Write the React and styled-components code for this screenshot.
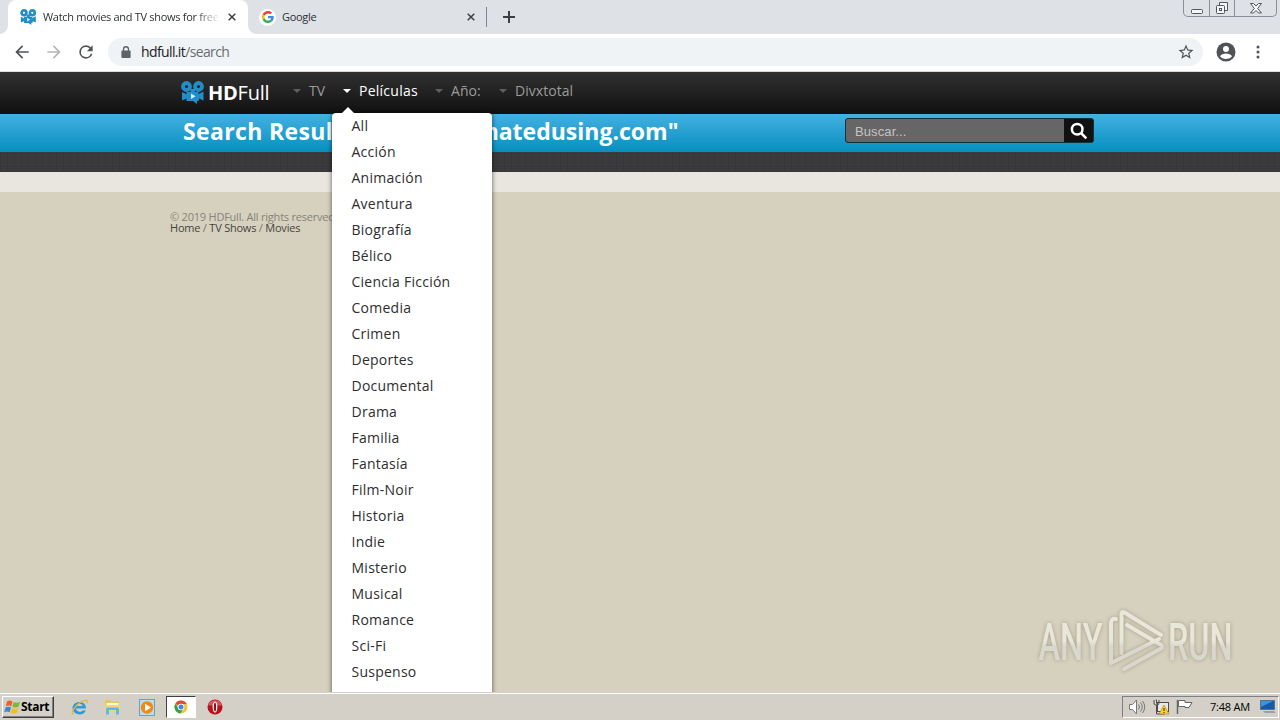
import styled, { createGlobalStyle } from "styled-components";

const genres = [
  "All",
  "Acción",
  "Animación",
  "Aventura",
  "Biografía",
  "Bélico",
  "Ciencia Ficción",
  "Comedia",
  "Crimen",
  "Deportes",
  "Documental",
  "Drama",
  "Familia",
  "Fantasía",
  "Film-Noir",
  "Historia",
  "Indie",
  "Misterio",
  "Musical",
  "Romance",
  "Sci-Fi",
  "Suspenso",
];

export default function App() {
  return (
    <Screen>
      <GlobalStyle />
      <TabStrip>
        <ActiveTab>
          <CameraIcon $width={17} $height={16} />
          <TabTitle $faded>Watch movies and TV shows for free</TabTitle>
          <CloseIcon />
        </ActiveTab>
        <Tab>
          <GoogleIcon />
          <TabTitle>Google</TabTitle>
          <CloseIcon />
        </Tab>
        <NewTab viewBox="0 0 12 12">
          <path d="M6 0v12M0 6h12" />
        </NewTab>
        <WindowButtons>
          <WindowButton $width={25}>
            <svg width="14" height="15" viewBox="0 0 14 15">
              <rect x="1.5" y="8.5" width="11" height="4" rx="1" />
            </svg>
          </WindowButton>
          <WindowButton $width={25}>
            <svg width="14" height="15" viewBox="0 0 14 15">
              <path d="M4.5 4V1.500h8v8H10" />
              <rect x="1.500" y="4.500" width="8" height="8" rx="1" />
              <rect x="4.500" y="7.500" width="2" height="2" />
            </svg>
          </WindowButton>
          <WindowButton $width={42}>
            <svg width="14" height="15" viewBox="0 0 14 15">
              <path d="M1.500 2.500h3L7 5l2.500-2.500h3L8.700 7.500l3.800 4.500h-3L7 9.500 4.500 12h-3l3.800-4.500z" />
            </svg>
          </WindowButton>
        </WindowButtons>
      </TabStrip>

      <Toolbar>
        <NavIcon viewBox="0 0 24 24">
          <path d="M20 11H7.830l5.590-5.590L12 4l-8 8 8 8 1.410-1.410L7.830 13H20z" />
        </NavIcon>
        <NavIcon viewBox="0 0 24 24" $disabled>
          <path d="M12 4l-1.410 1.410L16.170 11H4v2h12.170l-5.580 5.590L12 20l8-8z" />
        </NavIcon>
        <NavIcon viewBox="0 0 24 24">
          <path d="M17.650 6.350A7.960 7.960 0 0 0 12 4a8 8 0 1 0 7.730 10h-2.080A6 6 0 1 1 12 6c1.660 0 3.140.69 4.220 1.780L13 11h7V4z" />
        </NavIcon>
        <AddressBar>
          <LockIcon viewBox="0 0 10 13">
            <path d="M2.300 6V3.500a2.700 2.700 0 0 1 5.400 0V6" />
            <rect y="5" width="10" height="8" rx="1" />
          </LockIcon>
          <Address>
            hdfull.it<span>/search</span>
          </Address>
          <StarIcon viewBox="0 0 24 24">
            <path d="M22 9.240l-7.190-.62L12 2 9.190 8.630 2 9.240l5.460 4.730L5.820 21 12 17.270 18.180 21l-1.630-7.030zM12 15.400l-3.760 2.270 1-4.280-3.320-2.880 4.380-.38L12 6.100l1.710 4.040 4.380.38-3.320 2.880 1 4.280z" />
          </StarIcon>
        </AddressBar>
        <ProfileIcon viewBox="0 0 20 20">
          <circle cx="10" cy="10" r="9.500" />
          <circle cx="10" cy="7" r="3" />
          <path d="M4 14.200c1.200-1.900 3.400-2.700 6-2.700s4.800.8 6 2.700c-1.300 1.800-3.500 2.800-6 2.800s-4.700-1-6-2.800z" />
        </ProfileIcon>
        <MenuDots viewBox="0 0 4 14">
          <circle cx="2" cy="2" r="1.500" />
          <circle cx="2" cy="7" r="1.500" />
          <circle cx="2" cy="12" r="1.500" />
        </MenuDots>
      </Toolbar>

      <Site>
        <Header>
          <CameraIcon $width={24} $height={23} />
          <Brand>
            <b>HD</b>Full
          </Brand>
          <Navigation>
            <NavItem $width={50}>
              <Caret />
              TV
            </NavItem>
            <NavItem $width={92} $active>
              <Caret $active />
              Películas
              <Dropdown>
                {genres.map((genre) => (
                  <Genre key={genre}>{genre}</Genre>
                ))}
              </Dropdown>
            </NavItem>
            <NavItem $width={64}>
              <Caret />
              Año:
            </NavItem>
            <NavItem $width={80}>
              <Caret />
              Divxtotal
            </NavItem>
          </Navigation>
        </Header>
        <TitleBar>
          <Title>
            <TitleLead>Search Results</TitleLead>
            <span>"animatedusing.com"</span>
          </Title>
          <SearchForm>
            <SearchInput type="text" placeholder="Buscar..." />
            <SearchButton>
              <svg width="18" height="18" viewBox="0 0 18 18">
                <circle cx="7.200" cy="7.200" r="5.300" />
                <path d="M11 11l5.300 5.300" />
              </svg>
            </SearchButton>
          </SearchForm>
        </TitleBar>
        <FabricStrip />
        <PaleStrip />
        <Footer>
          <p>© 2019 HDFull. All rights reserved.</p>
          <FooterLinks>
            <span>Home</span> / <span>TV Shows</span> / <span>Movies</span>
          </FooterLinks>
        </Footer>
        <Watermark />
      </Site>

      <Taskbar>
        <StartButton>
          <WindowsIcon />
          Start
        </StartButton>
        <QuickLaunch>
          <TaskButton>
            <ExplorerIcon />
          </TaskButton>
          <TaskButton>
            <FolderIcon />
          </TaskButton>
          <TaskButton>
            <PlayerIcon />
          </TaskButton>
          <TaskButton $active>
            <ChromeIcon />
          </TaskButton>
          <TaskButton>
            <OperaIcon />
          </TaskButton>
        </QuickLaunch>
        <Tray>
          <TrayIcons />
          <Clock>7:48 AM</Clock>
          <DesktopIcon />
        </Tray>
      </Taskbar>
    </Screen>
  );
}

function CameraIcon({ $width, $height }) {
  return (
    <svg width={$width} height={$height} viewBox="0 0 24 23">
      <g fill="none" stroke="#218ec9" strokeWidth="3.800">
        <circle cx="5.500" cy="5.500" r="3.500" />
        <circle cx="17.500" cy="5.500" r="3.500" />
      </g>
      <path
        d="M9.500 8h4.500v3h3.500v2l5-2.500v9L18 17.500v2l-2 .5v3l-4-3H5.500v-2.500L1 19.500v-8.500l4.500 2.200V11h4z"
        fill="#218ec9"
      />
      <path d="M10 12.500v5.500l4.500-2.700z" fill="#d5effc" />
    </svg>
  );
}

function GoogleIcon() {
  return (
    <GoogleBadge>
      <svg width="12" height="12" viewBox="0 0 48 48">
        <path
          fill="#ea4335"
          d="M24 9.500c3.540 0 6.710 1.220 9.210 3.600l6.850-6.850C35.900 2.380 30.470 0 24 0 14.620 0 6.510 5.380 2.560 13.220l7.980 6.190C12.430 13.720 17.740 9.500 24 9.500z"
        />
        <path
          fill="#4285f4"
          d="M46.980 24.550c0-1.570-.15-3.090-.38-4.550H24v9.020h12.940c-.58 2.960-2.260 5.480-4.780 7.180l7.730 6c4.510-4.180 7.090-10.360 7.090-17.650z"
        />
        <path
          fill="#fbbc05"
          d="M10.530 28.590A14.500 14.500 0 0 1 9.770 24c0-1.600.27-3.140.76-4.590l-7.980-6.190A23.900 23.900 0 0 0 0 24c0 3.880.92 7.540 2.560 10.780z"
        />
        <path
          fill="#34a853"
          d="M24 48c6.480 0 11.930-2.130 15.890-5.810l-7.730-6c-2.150 1.450-4.920 2.300-8.160 2.300-6.260 0-11.570-4.220-13.470-9.910l-7.980 6.190C6.510 42.620 14.620 48 24 48z"
        />
      </svg>
    </GoogleBadge>
  );
}

function CloseIcon() {
  return (
    <Close viewBox="0 0 8 8">
      <path d="M.7.7l6.600 6.600M7.300.7L.7 7.300" />
    </Close>
  );
}

function WindowsIcon() {
  return (
    <svg width="17" height="16" viewBox="0 0 17 16">
      <path d="M3 2.500C5 1 7 1.500 8.500 2.500L7.300 7.300C5.500 6.300 3.800 6.300 1.800 7.300z" fill="#e8642c" />
      <path d="M9.500 3c2 1 4 1 6.500-.3l-1.400 5c-2.300 1-4.300 1.200-6.200 0z" fill="#7bb83c" />
      <path d="M1.500 8.500c2-1 3.800-1 5.500 0l-1.300 4.800c-1.700-1-3.500-1-5.500 0z" fill="#3e86d2" />
      <path d="M8 9c2 1 4 1 6.300-.2L13 13.700c-2.200 1.200-4.400 1.100-6.300 0z" fill="#f3bf27" />
    </svg>
  );
}

function ExplorerIcon() {
  return (
    <svg width="17" height="17" viewBox="0 0 17 17">
      <path
        d="M15 9.600H5c.2 3.200 5 4.100 6.600 1.900h3.200C12.500 18 1.500 16 1.500 9 1.500 1 15.500.500 15 9.600zM5 7h6.500c-.5-3-5.800-3-6.500 0z"
        fill="#2d9add"
        fillRule="evenodd"
      />
      <path
        d="M2 15.500C-1 12 9 1 15.500 1.300c1 .5.700 2 .2 3"
        fill="none"
        stroke="#e9b72f"
        strokeWidth="1.300"
      />
    </svg>
  );
}

function FolderIcon() {
  return (
    <svg width="17" height="16" viewBox="0 0 17 16">
      <path d="M1 2.500L2 1h4l1 1.500h8V8H1z" fill="#e8c55c" />
      <path d="M2.500 4h12v5h-12z" fill="#fff7ce" />
      <path d="M1 6h15v6H1z" fill="#f0d779" />
      <path d="M2 15.500V10q0-1.500 1.500-1.500h10Q15 8.500 15 10v5.500h-3V11H5v4.500z" fill="#62b7e4" />
    </svg>
  );
}

function PlayerIcon() {
  return (
    <svg width="16" height="17" viewBox="0 0 16 17">
      <rect x=".5" y=".5" width="15" height="16" fill="#b9dcf0" stroke="#6f9fc6" />
      <circle cx="8" cy="8.500" r="6.200" fill="#f08a14" />
      <path d="M6 4.800v7.400l6-3.700z" fill="#fff" />
    </svg>
  );
}

function ChromeIcon() {
  return (
    <svg width="14" height="14" viewBox="0 0 14 14">
      <circle cx="7" cy="7" r="6.500" fill="#f6c62d" />
      <path d="M7 7L1.300 3.800A6.500 6.500 0 0 1 12.700 4H7z" fill="#dd4b39" />
      <path d="M1.300 3.800A6.500 6.500 0 0 0 6.500 13.500L9 9 4.500 8.500z" fill="#35a04c" />
      <circle cx="7" cy="7" r="3.300" fill="#fff" />
      <circle cx="7" cy="7" r="2.500" fill="#4285f4" />
    </svg>
  );
}

function OperaIcon() {
  return (
    <svg width="16" height="16" viewBox="0 0 16 16">
      <ellipse cx="8" cy="8" rx="7.500" ry="7.500" fill="#b5121b" />
      <path d="M1 6.500C3-.5 13-.5 15 6.500z" fill="#d8555b" />
      <ellipse cx="8" cy="8" rx="2.400" ry="5.500" fill="#fff" />
      <ellipse cx="8" cy="8" rx="1.100" ry="4.500" fill="#8f0d15" />
    </svg>
  );
}

function TrayIcons() {
  return (
    <svg width="66" height="18" viewBox="0 0 66 18">
      <g fill="none" stroke="#77777a">
        <path d="M1.500 6.500h3l4-4.500v14l-4-4.500h-3z" fill="#fff" />
        <path d="M10.500 6.500q2 2.500 0 5M12.500 4.500q3.500 4.500 0 9M14.500 3q4.500 6 0 12" />
      </g>
      <g stroke="#4c4c4c">
        <rect x="29.500" y="4.500" width="11" height="9" fill="#e8e8e8" />
        <path d="M26 2v3q0 2 2 2h1q2 0 2-2V2M28.500 1.500v4M28.500 7v9h8" fill="none" />
      </g>
      <path d="M36 7l5 9H31z" fill="#ffd42a" stroke="#b18a10" strokeWidth=".7" />
      <path d="M36 10v3M36 14v1" stroke="#222" />
      <g fill="#fff" stroke="#66666a">
        <path d="M49.500 2v14" strokeWidth="1.500" />
        <path d="M50.500 2.500H57v2h7l-3 5h-4v-1h-6.500z" />
      </g>
    </svg>
  );
}

function DesktopIcon() {
  return (
    <svg width="16" height="14" viewBox="0 0 16 14">
      <path d="M.5.500h14v9H.5z" fill="#1659a8" stroke="#54728f" />
      <path d="M1 1h12L1 7z" fill="#3e93dc" />
      <path d="M3 11h11l1.500 2H5z" fill="#8aa3b6" />
    </svg>
  );
}

function Watermark() {
  return (
    <WatermarkSvg viewBox="0 0 210 76">
      <defs>
        <linearGradient id="mark" x1="0" y1="0" x2="0" y2="76" gradientUnits="userSpaceOnUse">
          <stop offset="0.480" stopColor="#e9e6da" />
          <stop offset="0.560" stopColor="#dad7cd" />
        </linearGradient>
      </defs>
      <g fill="url(#mark)">
        <text x="8.500" y="55.500" textLength="64" lengthAdjust="spacingAndGlyphs">
          ANY
        </text>
        <text x="138" y="55.500" textLength="64.500" lengthAdjust="spacingAndGlyphs">
          RUN
        </text>
      </g>
      <g
        fill="none"
        stroke="url(#mark)"
        strokeWidth="4"
        strokeLinecap="round"
        strokeLinejoin="round"
      >
        <path d="M86 15q-5-1-5 5v39l48-24" />
        <path d="M91.500 49V10q0-3 3-1.500L131 31" />
        <path d="M97 21l34 20q2 2 0 3.500L94 65" />
      </g>
    </WatermarkSvg>
  );
}

const GlobalStyle = createGlobalStyle`
  * {
    box-sizing: border-box;
  }

  body {
    font-family: "Open Sans", sans-serif;
    margin: 0;
    overflow: hidden;
  }

  svg {
    display: block;
    flex-shrink: 0;
  }
`;

const Screen = styled.div`
  display: flex;
  flex-direction: column;
  height: 720px;
  overflow: hidden;
  width: 1280px;
`;

const TabStrip = styled.div`
  background-color: #dee1e6;
  display: flex;
  height: 34px;
  padding-left: 8px;
`;

const Tab = styled.div`
  align-items: center;
  display: flex;
  height: 34px;
  padding: 0 12px 0 11px;
  position: relative;
  width: 239px;

  &::after {
    background-color: #80868b;
    content: "";
    height: 20px;
    position: absolute;
    right: 0;
    top: 7px;
    width: 1px;
  }
`;

const ActiveTab = styled.div`
  align-items: center;
  background-color: #fff;
  border-radius: 8px 8px 0 0;
  display: flex;
  height: 34px;
  padding: 0 12px;
  position: relative;
  width: 240px;

  &::before,
  &::after {
    bottom: 0;
    content: "";
    height: 8px;
    position: absolute;
    width: 8px;
  }

  &::before {
    background: radial-gradient(circle at 0 0, transparent 7.5px, #fff 8px);
    left: -8px;
  }

  &::after {
    background: radial-gradient(circle at 100% 0, transparent 7.5px, #fff 8px);
    right: -8px;
  }
`;

const TabTitle = styled.span`
  color: #2d3033;
  flex: 1;
  font-size: 11px;
  letter-spacing: -0.300px;
  margin: 0 10px 1px 6px;
  overflow: hidden;
  white-space: nowrap;
  ${(props) =>
    props.$faded && "mask-image: linear-gradient(90deg, #000 152px, transparent 177px);"}
`;

const Close = styled.svg`
  fill: none;
  height: 8px;
  stroke: #3c4043;
  stroke-width: 1.500;
  width: 8px;
`;

const GoogleBadge = styled.span`
  align-items: center;
  background-color: #fff;
  border-radius: 50%;
  display: flex;
  height: 17px;
  justify-content: center;
  width: 17px;
`;

const NewTab = styled.svg`
  height: 12px;
  margin: 11px 0 0 16px;
  stroke: #3c4043;
  stroke-width: 2;
  width: 12px;
`;

const WindowButtons = styled.div`
  border: 1px solid #8b8e94;
  border-radius: 0 0 5px 5px;
  border-top: none;
  display: flex;
  height: 17px;
  margin: 0 3px 0 auto;
`;

const WindowButton = styled.div`
  align-items: center;
  display: flex;
  justify-content: center;
  width: ${(props) => props.$width}px;

  & + & {
    border-left: 1px solid #8b8e94;
  }

  svg {
    fill: #f5f6f8;
    stroke: #53565c;
  }
`;

const Toolbar = styled.div`
  align-items: center;
  background-color: #fff;
  border-bottom: 1px solid #d8dadc;
  display: flex;
  height: 38px;
  padding: 0 18px 1px 12px;
`;

const NavIcon = styled.svg`
  fill: ${(props) => (props.$disabled ? "#b5b7b9" : "#505356")};
  height: 20px;
  margin-right: 12px;
  width: 20px;
`;

const AddressBar = styled.div`
  align-items: center;
  background-color: #f0f3f5;
  border-radius: 14px;
  display: flex;
  height: 28px;
  padding: 0 8px 0 13px;
  width: 1095px;
`;

const LockIcon = styled.svg`
  fill: #5f6368;
  height: 12px;
  width: 10px;

  path {
    fill: none;
    stroke: #5f6368;
    stroke-width: 1.400;
  }
`;

const Address = styled.span`
  color: #202124;
  flex: 1;
  font-size: 14px;
  letter-spacing: -0.620px;
  margin: 0 0 1px 10px;

  span {
    color: #686c71;
  }
`;

const StarIcon = styled.svg`
  fill: #505356;
  height: 18px;
  width: 18px;
`;

const ProfileIcon = styled.svg`
  fill: #505356;
  height: 20px;
  margin-left: 13px;
  width: 20px;

  circle + circle,
  path {
    fill: #fff;
  }
`;

const MenuDots = styled.svg`
  fill: #505356;
  height: 14px;
  margin-left: 20px;
  width: 4px;
`;

const Site = styled.main`
  background-color: #d6d1be;
  height: 620px;
  overflow: hidden;
  position: relative;
`;

const Header = styled.header`
  align-items: center;
  background: linear-gradient(#313131, #101010);
  display: flex;
  height: 42px;
  padding: 0 0 2px 181px;
`;

const Brand = styled.span`
  color: #fff;
  font-size: 20px;
  font-weight: 400;
  letter-spacing: -0.250px;
  margin-left: 3px;
  width: 85px;
`;

const Navigation = styled.nav`
  display: flex;
`;

const NavItem = styled.div`
  align-items: center;
  color: ${(props) => (props.$active ? "#fff" : "#9b9b9b")};
  display: flex;
  font-size: 14px;
  height: 40px;
  letter-spacing: ${(props) => (props.$active ? "0.25px" : "0.05px")};
  padding-bottom: 3px;
  position: relative;
  white-space: nowrap;
  width: ${(props) => props.$width}px;
`;

const Caret = styled.i`
  border: 4px solid transparent;
  border-bottom: none;
  border-top-color: ${(props) => (props.$active ? "#fff" : "#5e5e5e")};
  margin-right: 8px;
`;

const Dropdown = styled.div`
  background-color: #fff;
  border-radius: 4px 4px 0 0;
  box-shadow: 0 0 5px rgba(0, 0, 0, 0.6);
  height: 600px;
  left: -11px;
  letter-spacing: 0.250px;
  position: absolute;
  top: 41px;
  width: 160px;
  z-index: 1;

  &::before {
    border: 6px solid transparent;
    border-bottom-color: #fff;
    border-top: none;
    content: "";
    left: 10px;
    position: absolute;
    top: -6px;
  }
`;

const Genre = styled.div`
  color: #2e2e2e;
  font-size: 14px;
  height: 26px;
  line-height: 25px;
  padding-left: 19.500px;
`;

const TitleBar = styled.div`
  background: linear-gradient(#43b1e2, #068fbf);
  display: flex;
  height: 38px;
  padding: 3px 186px 0 183px;
`;

const Title = styled.h1`
  color: #fff;
  display: flex;
  font-size: 23px;
  font-weight: 700;
  justify-content: space-between;
  line-height: 28px;
  margin: 0;
  white-space: nowrap;
  width: 495.500px;
`;

const TitleLead = styled.span`
  letter-spacing: 0.350px;
`;

const SearchForm = styled.form`
  background-color: #111;
  border: 1px solid #14303c;
  border-radius: 3px;
  display: flex;
  height: 25px;
  margin: 1px 0 0 auto;
  overflow: hidden;
  width: 249px;
`;

const SearchInput = styled.input`
  background-color: #666;
  border: none;
  color: #fff;
  font-family: "Liberation Sans", sans-serif;
  font-size: 13px;
  letter-spacing: 0.100px;
  padding: 1px 9px 0;
  width: 218px;

  &::placeholder {
    color: #c4c4c4;
  }
`;

const SearchButton = styled.button`
  align-items: center;
  background-color: #111;
  border: none;
  display: flex;
  flex: 1;
  justify-content: center;
  padding: 0;

  svg {
    fill: none;
    stroke: #fff;
    stroke-width: 2.500;
  }
`;

const FabricStrip = styled.div`
  background:
    repeating-linear-gradient(rgba(255, 255, 255, 0.02) 0 1px, transparent 1px 3px),
    repeating-linear-gradient(90deg, rgba(0, 0, 0, 0.06) 0 1px, transparent 1px 7px), #39383a;
  height: 20px;
`;

const PaleStrip = styled.div`
  background-color: #e8e6de;
  height: 20px;
`;

const Footer = styled.footer`
  color: #85827a;
  font-size: 11px;
  letter-spacing: -0.220px;
  line-height: 11px;
  padding: 19px 170px;

  p {
    margin: 0;
  }
`;

const FooterLinks = styled.div`
  color: #77746c;

  span {
    color: #45443f;
  }
`;

const WatermarkSvg = styled.svg`
  filter: drop-shadow(0 0 2px rgba(100, 95, 70, 0.45));
  height: 76px;
  left: 1030px;
  position: absolute;
  top: 532px;
  width: 210px;

  text {
    font-family: Roboto, sans-serif;
    font-size: 51px;
    font-weight: 500;
  }
`;

const Taskbar = styled.footer`
  align-items: center;
  background-color: #d4d0c8;
  display: flex;
  height: 28px;
  padding: 2px 1px 0 2px;
  box-shadow: inset 0 1px #d4d0c8, inset 0 2px #fff;
`;

const StartButton = styled.button`
  align-items: center;
  background-color: #d4d0c8;
  border: 1px solid;
  border-color: #fff #404040 #404040 #fff;
  box-shadow: inset -1px -1px #808080;
  color: #000;
  display: flex;
  font-family: "Open Sans", sans-serif;
  font-size: 12px;
  font-weight: 700;
  height: 22px;
  letter-spacing: -0.300px;
  padding: 0 0 1px 1px;
  width: 52px;
`;

const QuickLaunch = styled.div`
  display: flex;
  gap: 3.900px;
  margin-left: 10px;
`;

const TaskButton = styled.div`
  align-items: center;
  background-color: ${(props) => (props.$active ? "#fff" : "transparent")};
  border: 1px solid;
  border-color: ${(props) =>
    props.$active ? "#404040 #fff #fff #404040" : "transparent"};
  display: flex;
  height: 22px;
  justify-content: center;
  width: 30px;
`;

const Tray = styled.div`
  align-items: center;
  border: 1px solid;
  border-color: #808080 #fff #fff #808080;
  display: flex;
  height: 22px;
  margin-left: auto;
  padding: 0 2px 0 5px;
  width: 157px;
`;

const Clock = styled.span`
  color: #000;
  font-size: 11px;
  letter-spacing: -0.200px;
  margin: 0 auto 1px 16px;
  white-space: nowrap;
`;
